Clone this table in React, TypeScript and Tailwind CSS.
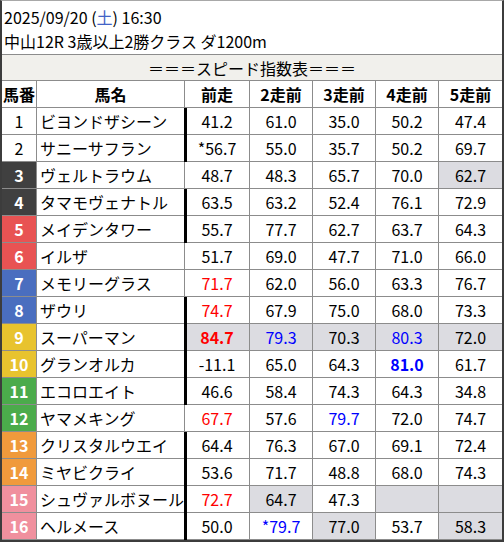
import React from "react";

type Cell = { t: string; c?: "r" | "b"; bold?: boolean; gray?: boolean };
type Row = { n: number; name: string; vals: Cell[]; bar?: boolean };

const frameBg: Record<number, string> = {
  1: "bg-white text-black font-normal",
  2: "bg-white text-black font-normal",
  3: "bg-[#404040] text-white font-bold",
  4: "bg-[#404040] text-white font-bold",
  5: "bg-[#e85353] text-white font-bold",
  6: "bg-[#e85353] text-white font-bold",
  7: "bg-[#4a6ebf] text-white font-bold",
  8: "bg-[#4a6ebf] text-white font-bold",
  9: "bg-[#e8c32e] text-white font-bold",
  10: "bg-[#e8c32e] text-white font-bold",
  11: "bg-[#4bab4b] text-white font-bold",
  12: "bg-[#4bab4b] text-white font-bold",
  13: "bg-[#f09a3c] text-white font-bold",
  14: "bg-[#f09a3c] text-white font-bold",
  15: "bg-[#f0909e] text-white font-bold",
  16: "bg-[#f0909e] text-white font-bold",
};

const c = (t: string, extra: Partial<Cell> = {}): Cell => ({ t, ...extra });

const rows: Row[] = [
  { n: 1, name: "ビヨンドザシーン", bar: true, vals: [c("41.2"), c("61.0"), c("35.0"), c("50.2"), c("47.4")] },
  { n: 2, name: "サニーサフラン", bar: true, vals: [c("*56.7"), c("55.0"), c("35.7"), c("50.2"), c("69.7")] },
  { n: 3, name: "ヴェルトラウム", vals: [c("48.7"), c("48.3"), c("65.7"), c("70.0"), c("62.7", { gray: true })] },
  { n: 4, name: "タマモヴェナトル", bar: true, vals: [c("63.5"), c("63.2"), c("52.4"), c("76.1"), c("72.9")] },
  { n: 5, name: "メイデンタワー", bar: true, vals: [c("55.7"), c("77.7"), c("62.7"), c("63.7"), c("64.3")] },
  { n: 6, name: "イルザ", vals: [c("51.7"), c("69.0"), c("47.7"), c("71.0"), c("66.0")] },
  { n: 7, name: "メモリーグラス", vals: [c("71.7", { c: "r" }), c("62.0"), c("56.0"), c("63.3"), c("76.7")] },
  { n: 8, name: "ザウリ", bar: true, vals: [c("74.7", { c: "r" }), c("67.9"), c("75.0"), c("68.0"), c("73.3")] },
  {
    n: 9,
    name: "スーパーマン",
    bar: true,
    vals: [
      c("84.7", { c: "r", bold: true, gray: true }),
      c("79.3", { c: "b", gray: true }),
      c("70.3", { gray: true }),
      c("80.3", { c: "b", gray: true }),
      c("72.0", { gray: true }),
    ],
  },
  { n: 10, name: "グランオルカ", bar: true, vals: [c("-11.1"), c("65.0"), c("64.3"), c("81.0", { c: "b", bold: true }), c("61.7")] },
  { n: 11, name: "エコロエイト", bar: true, vals: [c("46.6"), c("58.4"), c("74.3"), c("64.3"), c("34.8")] },
  { n: 12, name: "ヤマメキング", vals: [c("67.7", { c: "r" }), c("57.6"), c("79.7", { c: "b" }), c("72.0"), c("74.7")] },
  { n: 13, name: "クリスタルウエイ", bar: true, vals: [c("64.4"), c("76.3"), c("67.0"), c("69.1"), c("72.4")] },
  { n: 14, name: "ミヤビクライ", bar: true, vals: [c("53.6"), c("71.7"), c("48.8"), c("68.0"), c("74.3")] },
  {
    n: 15,
    name: "シュヴァルボヌール",
    bar: true,
    vals: [c("72.7", { c: "r" }), c("64.7", { gray: true }), c("47.3"), c("", { gray: true }), c("", { gray: true })],
  },
  {
    n: 16,
    name: "ヘルメース",
    bar: true,
    vals: [c("50.0"), c("*79.7", { c: "b" }), c("77.0", { gray: true }), c("53.7"), c("58.3", { gray: true })],
  },
];

const cols = "grid grid-cols-[35px_148px_65px_63px_63px_63px_63px]";

export default function App() {
  return (
    <div
      className="w-[504px] h-[542px] bg-white border-l-2 border-r-2 border-b-2 border-t border-l-[#3c3c3c] border-r-[#3c3c3c] border-b-[#3c3c3c] border-t-[#a8a8a8] text-black text-[16px] flex flex-col"
      style={{ fontFamily: '"Noto Sans CJK JP", "Noto Sans", sans-serif' }}
    >
      <div className="h-[53px] pl-[2px] pt-[4px] leading-[24px]">
        <div>
          2025/09/20 (<span className="text-[#4263c6]">土</span>) 16:30
        </div>
        <div>中山12R 3歳以上2勝クラス ダ1200m</div>
      </div>
      <div className="h-[27px] border-t border-b border-[#8c8c8c] bg-[#f1f0ec] flex items-center justify-center leading-none">
        ＝＝＝スピード指数表＝＝＝
      </div>
      <div className={`${cols} h-[27px] border-b border-[#8c8c8c] font-bold leading-none`}>
        <div className="border-r border-[#8c8c8c] flex items-center justify-center">馬番</div>
        <div className="border-r border-[#8c8c8c] flex items-center justify-center">馬名</div>
        <div className="border-r border-[#8c8c8c] flex items-center justify-center">前走</div>
        <div className="border-r border-[#8c8c8c] flex items-center justify-center">2走前</div>
        <div className="border-r border-[#8c8c8c] flex items-center justify-center">3走前</div>
        <div className="border-r border-[#8c8c8c] flex items-center justify-center">4走前</div>
        <div className="flex items-center justify-center">5走前</div>
      </div>
      {rows.map((r, i) => (
        <div
          key={r.n}
          className={`${cols} h-[27px] leading-none ${i < rows.length - 1 ? "border-b" : "border-b"} border-[#8c8c8c]`}
        >
          <div className={`border-r border-[#8c8c8c] flex items-center justify-center ${frameBg[r.n]}`}>{r.n}</div>
          <div className="border-r border-[#8c8c8c] flex items-center pl-[3px] whitespace-nowrap overflow-hidden">
            {r.name}
          </div>
          {r.vals.map((v, j) => (
            <div
              key={j}
              className={`relative flex items-center justify-center ${j < 4 ? "border-r border-[#8c8c8c]" : ""} ${
                v.gray ? "bg-[#dcdce1]" : ""
              } ${v.c === "r" ? "text-[#ff0000]" : v.c === "b" ? "text-[#0000ff]" : ""} ${v.bold ? "font-bold" : ""}`}
            >
              {j === 0 && r.bar && (
                <span className="absolute left-[-1px] top-0 bottom-[-1px] w-[3px] bg-black" />
              )}
              {v.t}
            </div>
          ))}
        </div>
      ))}
    </div>
  );
}
